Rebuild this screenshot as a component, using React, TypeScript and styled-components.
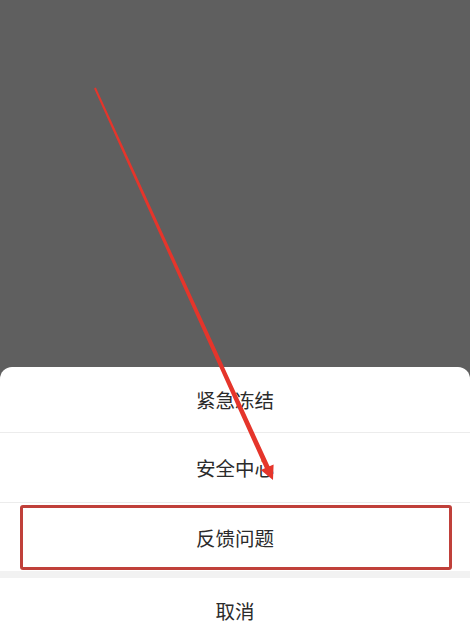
import * as React from 'react';
import styled, { createGlobalStyle } from 'styled-components';

const GlobalStyle = createGlobalStyle`
  html, body {
    margin: 0;
    padding: 0;
    height: 642px;
    overflow: hidden;
  }
  #root {
    height: 100%;
  }
`;

const Overlay = styled.div`
  position: relative;
  width: 470px;
  height: 642px;
  background: #5f5f5f;
  display: flex;
  flex-direction: column;
  justify-content: flex-end;
  font-family: 'Noto Sans CJK SC', 'Noto Sans', sans-serif;
`;

const Sheet = styled.div`
  background: #ffffff;
  border-radius: 12px 12px 0 0;
  display: flex;
  flex-direction: column;
`;

const Item = styled.div<{ $h: number; $divider?: boolean }>`
  position: relative;
  height: ${(p) => p.$h}px;
  display: flex;
  align-items: center;
  justify-content: center;
  font-size: 19.5px;
  color: #2b2b2b;
  border-bottom: ${(p) => (p.$divider ? '1px solid #ececec' : 'none')};
`;

const Gap = styled.div`
  height: 7px;
  background: #f2f2f2;
`;

const Highlight = styled.div`
  position: absolute;
  left: 20px;
  right: 18px;
  top: 2px;
  bottom: 1px;
  border: 3px solid #c0403a;
  border-radius: 3px;
  pointer-events: none;
`;

const ArrowLayer = styled.svg`
  position: absolute;
  left: 0;
  top: 0;
  width: 470px;
  height: 642px;
  pointer-events: none;
`;

const Arrow: React.FC = () => (
  <ArrowLayer viewBox="0 0 470 642">
    <polygon
      points="95.9,87.6 269.5,466.2 273.6,464.4 273,480 260.8,470.1 264.9,468.3 94.1,88.4"
      fill="#e5352b"
    />
  </ArrowLayer>
);

const App: React.FC = () => (
  <>
    <GlobalStyle />
    <Overlay>
      <Sheet>
        <Item $h={65} $divider>紧急冻结</Item>
        <Item $h={69} $divider>安全中心</Item>
        <Item $h={68}>
          反馈问题
          <Highlight />
        </Item>
        <Gap />
        <Item $h={64}>取消</Item>
      </Sheet>
      <Arrow />
    </Overlay>
  </>
);

export default App;
